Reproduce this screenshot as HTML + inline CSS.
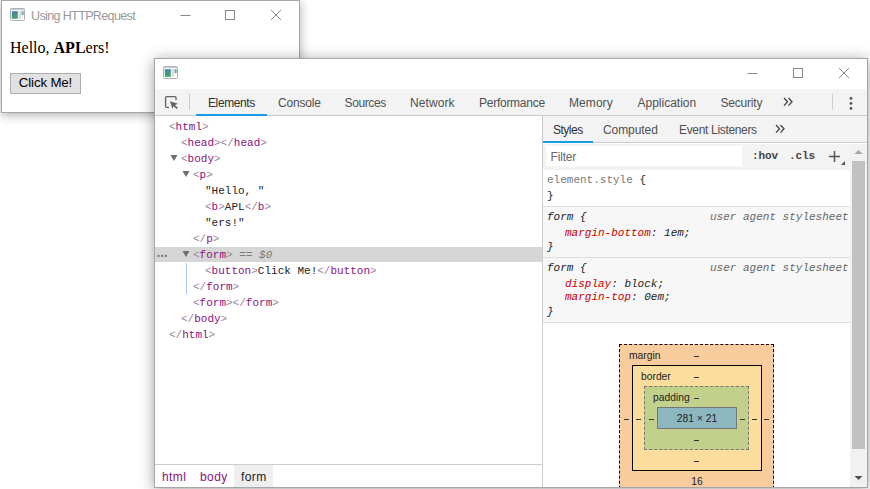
<!DOCTYPE html>
<html><head><meta charset="utf-8">
<style>
*{box-sizing:border-box;margin:0;padding:0}
html,body{width:870px;height:489px;overflow:hidden;background:#fff;font-family:"Liberation Sans",sans-serif;}
.abs{position:absolute}
#w1{position:absolute;left:1px;top:0;width:299px;height:113px;background:#fff;border:1px solid #a6a6a6;box-shadow:0 2px 10px rgba(0,0,0,.32)}
#w1 .title{position:absolute;left:29px;top:8px;font-size:12.5px;color:#999;white-space:nowrap;letter-spacing:-0.62px}
#w1 .hello{position:absolute;left:8px;top:38px;font-family:"Liberation Serif",serif;font-size:16px;color:#000;white-space:nowrap}
#w1 .btn{position:absolute;left:8px;top:72px;width:71px;height:21px;border:1px solid #adadad;background:#e1e1e1;font-size:13.3px;color:#000;text-align:center;line-height:18px;letter-spacing:-0.15px}
#w2{position:absolute;left:154px;top:58px;width:714px;height:430px;background:#fff;border:1px solid #a6a6a6;box-shadow:0 2px 14px rgba(0,0,0,.38);overflow:hidden}
.mono{font-family:"Liberation Mono",monospace}
.tb{position:absolute;left:0;top:30px;width:712px;height:27px;background:#f3f3f3;border-bottom:1px solid #ccc}
.tab,.rt{position:absolute;font-size:12px;color:#505050;white-space:nowrap}
.sel{color:#303030}
.tab{top:7px}
.rt{top:64px}
.dom{position:absolute;font-family:"Liberation Mono",monospace;font-size:11px;color:#881280;white-space:nowrap;line-height:16px}
.dom i{font-style:normal;color:#9c849b}
.dom .t{color:#222}
.sty{position:absolute;font-family:"Liberation Mono",monospace;font-size:11px;color:#222;white-space:nowrap;line-height:14px}
.it{font-style:italic}
.sty .p{color:#c80000}
.bm{position:absolute;font-size:10.3px;color:#222;white-space:nowrap;line-height:12px}
.bm.c{text-align:center}
.d{position:absolute;width:5px;height:1px;background:#333}
.bc{position:absolute;top:411px;font-size:12px;letter-spacing:.4px}
</style></head><body>
<div id="w1">
  <svg class="abs" style="left:8px;top:7px" width="15" height="13"><defs><linearGradient id="g1" x1="0" y1="0" x2="0.300" y2="1"><stop offset="0" stop-color="#4a78b8"/><stop offset="1" stop-color="#3fa860"/></linearGradient></defs><rect x=".5" y=".5" width="14" height="12" rx=".8" fill="#fff" stroke="#adb1ba"/><rect x="1" y="1" width="13" height="1.200" fill="#c8ccd4"/><rect x="1.800" y="3.200" width="6" height="7.600" fill="url(#g1)"/><rect x="8.600" y="3.200" width="2.300" height="7.600" fill="#dadada"/><rect x="11.500" y="3.200" width="2.200" height="4" fill="url(#g1)" opacity=".75"/></svg>
  <div class="title">Using HTTPRequest</div>
  <svg class="abs" style="left:169px;top:0" width="130" height="30"><path d="M9.500 14.500h10" stroke="#888" fill="none"/><rect x="54.500" y="9.500" width="9" height="9" stroke="#888" fill="none"/><path d="M100 9l10 10M110 9l-10 10" stroke="#888" fill="none"/></svg>
  <div class="hello">Hello, <b>APL</b>ers!</div>
  <div class="btn">Click Me!</div>
</div>
<div id="w2">
  <svg class="abs" style="left:8px;top:7px" width="15" height="13"><rect x=".5" y=".5" width="14" height="12" rx=".8" fill="#fff" stroke="#adb1ba"/><rect x="1" y="1" width="13" height="1.200" fill="#c8ccd4"/><rect x="1.800" y="3.200" width="6" height="7.600" fill="url(#g1)"/><rect x="8.600" y="3.200" width="2.300" height="7.600" fill="#dadada"/><rect x="11.500" y="3.200" width="2.200" height="4" fill="url(#g1)" opacity=".75"/></svg>
  <svg class="abs" style="left:580px;top:0" width="130" height="30"><path d="M12.500 14.500h10" stroke="#888" fill="none"/><rect x="58.500" y="9.500" width="9" height="9" stroke="#888" fill="none"/><path d="M104 9l10 10M114 9l-10 10" stroke="#888" fill="none"/></svg>
  <div class="tb">
    <svg class="abs" style="left:8px;top:5px" width="18" height="18"><path d="M6 13.300H3.600a1 1 0 0 1-1-1V3.600a1 1 0 0 1 1-1h8.400a1 1 0 0 1 1 1V6" stroke="#636363" stroke-width="1.300" fill="none"/><path d="M7 7.200L15 9.800 11.900 11 14.900 13.800 13.800 14.900 10.600 12.200 9.400 14.800z" fill="#636363"/></svg>
    <div class="abs" style="left:34px;top:5px;width:1px;height:16px;background:#ccc"></div>
    <div class="tab sel" style="left:53px;letter-spacing:-0.39px">Elements</div>
    <div class="tab" style="left:123px;letter-spacing:-0.19px">Console</div>
    <div class="tab" style="left:189.500px;letter-spacing:-0.37px">Sources</div>
    <div class="tab" style="left:255px;letter-spacing:0.08px">Network</div>
    <div class="tab" style="left:324px;letter-spacing:-0.26px">Performance</div>
    <div class="tab" style="left:414px;letter-spacing:0.07px">Memory</div>
    <div class="tab" style="left:482.500px">Application</div>
    <div class="tab" style="left:565.500px;letter-spacing:-0.2px">Security</div>
    <svg class="abs" style="left:628px;top:8px" width="11" height="10"><path d="M1 1l3.500 3.800L1 8.600M5.500 1L9 4.800 5.500 8.600" stroke="#444" stroke-width="1.300" fill="none"/></svg>
    <div class="abs" style="left:677px;top:5px;width:1px;height:16px;background:#ccc"></div>
    <svg class="abs" style="left:693px;top:6px" width="6" height="16"><circle cx="3" cy="3.400" r="1.400" fill="#555"/><circle cx="3" cy="8.400" r="1.400" fill="#555"/><circle cx="3" cy="13.400" r="1.400" fill="#555"/></svg>
    <div class="abs" style="left:41px;top:25px;width:71px;height:2px;background:#1a9be6"></div>
  </div>

  <!-- DOM tree -->
  <div class="abs" style="left:0;top:188px;width:387px;height:15px;background:#d6d6d6"></div>
  <div class="abs" style="left:31px;top:204px;width:1px;height:31px;background:#a8c5e8"></div>
  <div class="dom" style="left:14px;top:60px"><i>&lt;</i>html<i>&gt;</i></div>
  <div class="dom" style="left:26px;top:76px"><i>&lt;</i>head<i>&gt;&lt;/</i>head<i>&gt;</i></div>
  <div class="dom" style="left:26px;top:92px"><i>&lt;</i>body<i>&gt;</i></div>
  <div class="dom" style="left:38px;top:108px"><i>&lt;</i>p<i>&gt;</i></div>
  <div class="dom" style="left:50px;top:124px"><span class="t">"Hello, "</span></div>
  <div class="dom" style="left:50px;top:140px"><i>&lt;</i>b<i>&gt;</i><span class="t">APL</span><i>&lt;/</i>b<i>&gt;</i></div>
  <div class="dom" style="left:50px;top:156px"><span class="t">"ers!"</span></div>
  <div class="dom" style="left:38px;top:172px"><i>&lt;/</i>p<i>&gt;</i></div>
  <div class="dom" style="left:38px;top:188px"><i>&lt;</i>form<i>&gt;</i><span style="color:#7a7a7a;font-style:italic"> == $0</span></div>
  <div class="dom" style="left:50px;top:204px"><i>&lt;</i>button<i>&gt;</i><span class="t">Click Me!</span><i>&lt;/</i>button<i>&gt;</i></div>
  <div class="dom" style="left:38px;top:220px"><i>&lt;/</i>form<i>&gt;</i></div>
  <div class="dom" style="left:38px;top:236px"><i>&lt;</i>form<i>&gt;&lt;/</i>form<i>&gt;</i></div>
  <div class="dom" style="left:26px;top:252px"><i>&lt;/</i>body<i>&gt;</i></div>
  <div class="dom" style="left:14px;top:268px"><i>&lt;/</i>html<i>&gt;</i></div>
  <svg class="abs" style="left:15px;top:95px" width="8" height="8"><path d="M0.500 1h7L4 7z" fill="#6e6e6e"/></svg>
  <svg class="abs" style="left:27px;top:111px" width="8" height="8"><path d="M0.500 1h7L4 7z" fill="#6e6e6e"/></svg>
  <svg class="abs" style="left:27px;top:191px" width="8" height="8"><path d="M0.500 1h7L4 7z" fill="#6e6e6e"/></svg>
  <svg class="abs" style="left:2px;top:195px" width="12" height="4"><circle cx="1.500" cy="2" r="1.150" fill="#777"/><circle cx="5.200" cy="2" r="1.150" fill="#777"/><circle cx="8.900" cy="2" r="1.150" fill="#777"/></svg>
  <!-- breadcrumbs -->
  <div class="abs" style="left:0;top:405px;width:387px;height:1px;background:#ccc"></div>
  <div class="abs" style="left:79px;top:406px;width:39px;height:23px;background:#eee"></div>
  <div class="bc" style="left:7px;color:#881280">html</div>
  <div class="bc" style="left:45px;color:#881280">body</div>
  <div class="bc" style="left:86px;color:#222">form</div>
  <!-- splitter -->
  <div class="abs" style="left:387px;top:57px;width:1px;height:373px;background:#ccc"></div>

  <!-- right pane -->
  <div class="abs" style="left:388px;top:57px;width:324px;height:27px;background:#f3f3f3;border-bottom:1px solid #ccc"></div>
  <div class="abs" style="left:388px;top:82px;width:50px;height:2px;background:#1a9be6"></div>
  <div class="rt sel" style="left:398px;letter-spacing:-0.5px">Styles</div>
  <div class="rt" style="left:448px;letter-spacing:-0.08px">Computed</div>
  <div class="rt" style="left:524px;letter-spacing:-0.33px">Event Listeners</div>
  <svg class="abs" style="left:620px;top:65px" width="11" height="10"><path d="M1 1l3.500 3.800L1 8.600M5.500 1L9 4.800 5.500 8.600" stroke="#444" stroke-width="1.300" fill="none"/></svg>
  <div class="abs" style="left:388px;top:85px;width:307px;height:26px;background:#f3f3f3"></div>
  <div class="abs" style="left:391px;top:87px;width:196px;height:20px;background:#fff"></div>
  <div class="abs" style="left:395.500px;top:91px;font-size:12px;color:#6a6a6a;letter-spacing:-.17px">Filter</div>
  <div class="abs mono" style="left:597px;top:91px;font-size:11px;font-weight:bold;color:#444;letter-spacing:-.1px">:hov</div>
  <div class="abs mono" style="left:634px;top:91px;font-size:11px;font-weight:bold;color:#444;letter-spacing:-.1px">.cls</div>
  <svg class="abs" style="left:672px;top:91px" width="20" height="18"><path d="M2 6.500h11M7.500 1v11" stroke="#555" stroke-width="1.500" fill="none"/><path d="M18 11v4h-4z" fill="#555"/></svg>
  <!-- scrollbar -->
  <div class="abs" style="left:695px;top:85px;width:17px;height:345px;background:#f1f1f1"></div>
  <div class="abs" style="left:697px;top:102px;width:13px;height:288px;background:#c1c1c1"></div>
  <svg class="abs" style="left:696px;top:85px" width="15" height="17"><path d="M3.500 10L7.500 6l4 4z" fill="#a3a3a3"/></svg>
  <svg class="abs" style="left:696px;top:411px" width="15" height="17"><path d="M3.500 6L7.500 10l4-4z" fill="#505050"/></svg>
  <!-- styles -->
  <div class="abs" style="left:388px;top:147px;width:307px;height:1px;background:#ddd"></div>
  <div class="abs" style="left:388px;top:148px;width:307px;height:51px;background:#f7f7f7"></div>
  <div class="abs" style="left:388px;top:198px;width:307px;height:1px;background:#ddd"></div>
  <div class="abs" style="left:388px;top:199px;width:307px;height:64px;background:#f7f7f7"></div>
  <div class="abs" style="left:388px;top:263px;width:307px;height:1px;background:#ddd"></div>
  <div class="sty" style="left:392px;top:114px;color:#777">element.style <span style="color:#222">{</span></div>
  <div class="sty" style="left:392px;top:130px">}</div>
  <div class="sty it" style="left:392px;top:151px">form {</div>
  <div class="sty it" style="left:410px;top:167px"><span class="p">margin-bottom</span>: 1em;</div>
  <div class="sty it" style="left:392px;top:181px">}</div>
  <div class="sty it" style="left:555px;top:151px;color:#666">user agent stylesheet</div>
  <div class="sty it" style="left:392px;top:202px">form {</div>
  <div class="sty it" style="left:410px;top:218px"><span class="p">display</span>: block;</div>
  <div class="sty it" style="left:410px;top:231px"><span class="p">margin-top</span>: 0em;</div>
  <div class="sty it" style="left:392px;top:246px">}</div>
  <div class="sty it" style="left:555px;top:202px;color:#666">user agent stylesheet</div>
  <!-- box model -->
  <div class="abs" style="left:464px;top:285px;width:155px;height:160px;background:#f9cc9d;border:1px dashed #000"></div>
  <div class="abs" style="left:477px;top:306px;width:130px;height:106px;background:#fddd9b;border:1px solid #000"></div>
  <div class="abs" style="left:489px;top:327px;width:105px;height:64px;background:#c3d08b;border:1px dashed #777"></div>
  <div class="abs" style="left:502px;top:348px;width:80px;height:22px;background:#8cb6c0;border:1px solid #777"></div>
  <div class="bm" style="left:474px;top:291px">margin</div>
  <div class="bm" style="left:486px;top:312px">border</div>
  <div class="bm" style="left:498px;top:333px">padding</div>
  <div class="bm c" style="left:502px;width:80px;top:354px">281 × 21</div>
  <div class="bm c" style="left:532px;width:20px;top:417px">16</div>
  <div class="d" style="left:539px;top:297px"></div>
  <div class="d" style="left:539px;top:318px"></div>
  <div class="d" style="left:539px;top:339px"></div>
  <div class="d" style="left:539px;top:381px"></div>
  <div class="d" style="left:539px;top:402px"></div>
  <div class="d" style="left:469px;top:360px"></div>
  <div class="d" style="left:481px;top:360px"></div>
  <div class="d" style="left:494px;top:360px"></div>
  <div class="d" style="left:585px;top:360px"></div>
  <div class="d" style="left:597px;top:360px"></div>
  <div class="d" style="left:609px;top:360px"></div>
</div>
</body></html>
